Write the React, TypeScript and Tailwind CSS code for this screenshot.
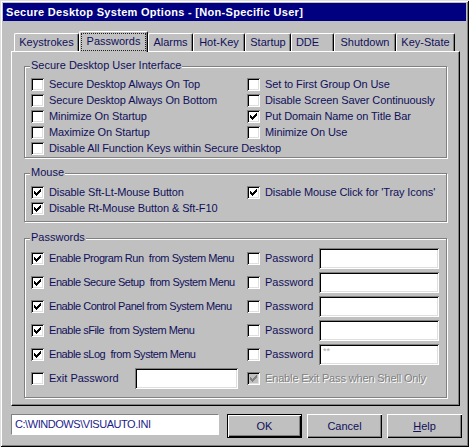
import React from "react";

const TEXT = "text-[#10105a]";

function Check({ disabled = false }: { disabled?: boolean }) {
  const ys = [5, 6, 7, 6, 5, 4, 3];
  return (
    <svg className="absolute left-0 top-0" width="13" height="13" viewBox="0 0 13 13">
      {ys.map((y, i) => (
        <rect key={i} x={3 + i} y={y} width="1" height="3" fill={disabled ? "#808080" : "#000"} />
      ))}
    </svg>
  );
}

function Box({ checked = false, disabled = false }: { checked?: boolean; disabled?: boolean }) {
  return (
    <span
      className={`relative block w-[13px] h-[13px] shrink-0 ${
        disabled ? "bg-[#c0c0c0]" : "bg-white"
      } shadow-[inset_1px_1px_#808080,inset_-1px_-1px_#fff,inset_2px_2px_#000,inset_-2px_-2px_#dfdfdf]`}
    >
      {checked && <Check disabled={disabled} />}
    </span>
  );
}

function CheckRow({ label, checked = false, className = "" }: { label: string; checked?: boolean; className?: string }) {
  return (
    <div className={`flex items-start h-[16px] ${className}`}>
      <Box checked={checked} />
      <span className={`ml-[5px] leading-[13px] whitespace-nowrap tracking-[-0.1px] ${TEXT}`}>{label}</span>
    </div>
  );
}

function Group({ label, className = "", children }: { label: string; className?: string; children: React.ReactNode }) {
  return (
    <div className={`relative w-[423px] border border-[#808080] shadow-[inset_1px_1px_#fff,1px_1px_#fff] ${className}`}>
      <span className={`absolute left-[5px] top-[-8px] px-[1px] bg-[#c0c0c0] leading-[13px] ${TEXT}`}>{label}</span>
      {children}
    </div>
  );
}

function Field({ className = "", children }: { className?: string; children?: React.ReactNode }) {
  return (
    <div
      className={`h-[21px] bg-white shadow-[inset_1px_1px_#808080,inset_-1px_-1px_#fff,inset_2px_2px_#000,inset_-2px_-2px_#dfdfdf] ${className}`}
    >
      {children}
    </div>
  );
}

function PwRow({ label, stars = false }: { label: string; stars?: boolean }) {
  return (
    <div className="flex items-start h-[24px]">
      <div className="flex items-start w-[216px] shrink-0">
        <span className="mt-[5px]">
          <Box checked />
        </span>
        <span className={`ml-[5px] mt-[5px] leading-[13px] whitespace-pre tracking-[-0.45px] ${TEXT}`}>{label}</span>
      </div>
      <span className="mt-[5px]">
        <Box />
      </span>
      <span className={`ml-[5px] mt-[5px] w-[54px] leading-[13px] ${TEXT}`}>Password</span>
      <Field className="mt-[1px] w-[120px] relative">
        {stars && <span className="absolute left-[4px] top-[1px] text-[9px] leading-[12px] text-[#a8a8a8]">**</span>}
      </Field>
    </div>
  );
}

function Button({ children, isDefault = false }: { children: React.ReactNode; isDefault?: boolean }) {
  return (
    <div
      className={`w-[75px] h-[24px] flex items-center justify-center bg-[#c0c0c0] ${TEXT} ${
        isDefault
          ? "border border-black shadow-[inset_1px_1px_#fff,inset_-1px_-1px_#000,inset_-2px_-2px_#808080]"
          : "shadow-[inset_1px_1px_#fff,inset_-1px_-1px_#000,inset_-2px_-2px_#808080]"
      }`}
    >
      {children}
    </div>
  );
}

const tabs: { name: string; w: string; sel?: boolean; extra?: string }[] = [
  { name: "Keystrokes", w: "w-[65px]" },
  { name: "Passwords", w: "w-[69px]", sel: true },
  { name: "Alarms", w: "w-[45px]" },
  { name: "Hot-Key", w: "w-[52px]" },
  { name: "Startup", w: "w-[46px]" },
  { name: "DDE", w: "w-[43px]", extra: "pr-[10px]" },
  { name: "Shutdown", w: "w-[62px]" },
  { name: "Key-State", w: "w-[59px]" },
];

export default function App() {
  return (
    <div
      className="w-[469px] h-[447px] bg-[#c0c0c0] p-[3px] text-[11px] font-['Liberation_Sans',Arial,sans-serif] shadow-[inset_1px_1px_#dfdfdf,inset_-1px_-1px_#000,inset_2px_2px_#fff,inset_-2px_-2px_#808080] overflow-hidden"
    >
      {/* Title bar */}
      <div className="h-[18px] bg-[#000080] flex items-center pl-[3px]">
        <span className="text-white font-bold text-[11px] leading-[13px] whitespace-nowrap tracking-[0.3px]">
          Secure Desktop System Options - [Non-Specific User]
        </span>
      </div>

      <div className="pl-[8px]">
        {/* Tab strip */}
        <div className="mt-[10px] h-[20px] flex items-end pl-[3px]">
          {tabs.map((t) =>
            t.sel ? (
              <div
                key={t.name}
                className={`${t.w} h-[21px] -mb-[1px] relative z-10 bg-[#c0c0c0] rounded-t-[2px] border-t border-l border-white border-r border-r-black shadow-[inset_-1px_0_#808080] flex items-start justify-center pt-[1px] px-[1px]`}
              >
                <div className={`w-full h-[18px] border border-dotted border-[#202020] flex items-center justify-center ${TEXT}`}>
                  <span className="leading-[13px] -mt-[2px]">{t.name}</span>
                </div>
              </div>
            ) : (
              <div
                key={t.name}
                className={`${t.w} h-[18px] bg-[#c0c0c0] rounded-t-[2px] border-t border-l border-white border-r border-r-black shadow-[inset_-1px_0_#808080] flex items-center justify-center ${t.extra ?? ""} ${TEXT}`}
              >
                <span className="leading-[13px]">{t.name}</span>
              </div>
            )
          )}
        </div>

        {/* Panel */}
        <div className="w-[449px] h-[355px] border-t border-l border-white border-r border-b border-r-black border-b-black shadow-[inset_-1px_-1px_#808080] pl-[12px] pt-[14px]">
          <Group label="Secure Desktop User Interface" className="h-[92px] pt-[11px] pl-[6px]">
            <div className="grid grid-cols-[216px_1fr]">
              <CheckRow label="Secure Desktop Always On Top" />
              <CheckRow label="Set to First Group On Use" />
              <CheckRow label="Secure Desktop Always On Bottom" />
              <CheckRow label="Disable Screen Saver Continuously" />
              <CheckRow label="Minimize On Startup" />
              <CheckRow label="Put Domain Name on Title Bar" checked />
              <CheckRow label="Maximize On Startup" />
              <CheckRow label="Minimize On Use" />
              <CheckRow label="Disable All Function Keys within Secure Desktop" className="col-span-2" />
            </div>
          </Group>

          <Group label="Mouse" className="mt-[15px] h-[49px] pt-[12px] pl-[6px]">
            <div className="grid grid-cols-[216px_1fr]">
              <CheckRow label="Disable Sft-Lt-Mouse Button" checked />
              <CheckRow label="Disable Mouse Click for 'Tray Icons'" checked />
              <CheckRow label="Disable Rt-Mouse Button & Sft-F10" checked />
            </div>
          </Group>

          <Group label="Passwords" className="mt-[16px] h-[160px] pt-[8px] pl-[6px]">
            <PwRow label="Enable Program Run  from System Menu" />
            <PwRow label="Enable Secure Setup  from System Menu" />
            <PwRow label="Enable Control Panel from System Menu" />
            <PwRow label="Enable sFile  from System Menu" />
            <PwRow label="Enable sLog  from System Menu" stars />
            <div className="flex items-start h-[24px]">
              <div className="flex items-start w-[216px] shrink-0">
                <span className="mt-[5px]">
                  <Box />
                </span>
                <span className={`ml-[5px] mt-[5px] w-[86px] leading-[13px] whitespace-nowrap ${TEXT}`}>Exit Password</span>
                <Field className="mt-[1px] w-[103px]" />
              </div>
              <span className="mt-[5px]">
                <Box checked disabled />
              </span>
              <span className="ml-[5px] mt-[5px] leading-[13px] whitespace-nowrap tracking-[-0.15px] text-[#808080] [text-shadow:1px_1px_0_#fff]">
                Enable Exit Pass when Shell Only
              </span>
            </div>
          </Group>
        </div>

        {/* Bottom bar */}
        <div className="mt-[8px] flex items-start">
          <div className="w-[208px] h-[21px] bg-white border-t border-l border-[#808080] border-r border-b border-r-white border-b-white flex items-center pl-[3px]">
            <span className="leading-[13px] text-[#1c1c8a] whitespace-nowrap tracking-[-0.45px]">C:\WINDOWS\VISUAUTO.INI</span>
          </div>
          <div className="ml-[8px] flex gap-[5px]">
            <Button isDefault>OK</Button>
            <Button>Cancel</Button>
            <Button>
              <span>
                <span className="underline">H</span>elp
              </span>
            </Button>
          </div>
        </div>
      </div>
    </div>
  );
}
